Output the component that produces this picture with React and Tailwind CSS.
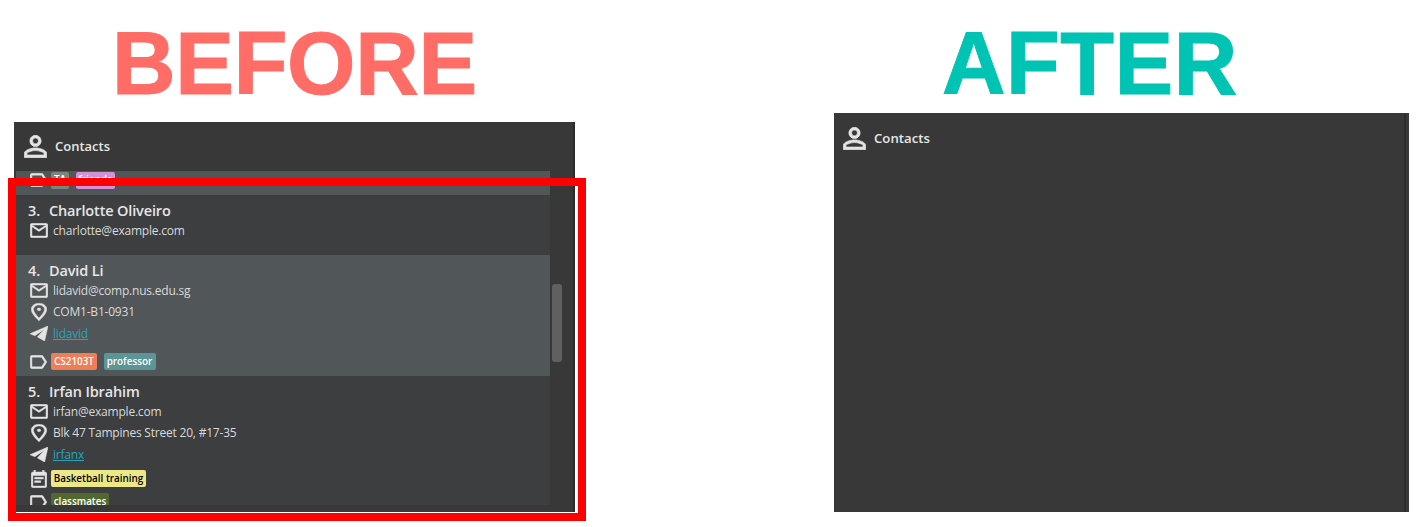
const PATHS = {
  person: {
    box: "3.8 3.8 16.4 16.4",
    d: "M12 5.9c1.16 0 2.1.94 2.1 2.1s-.94 2.1-2.1 2.1S9.9 9.16 9.9 8s.94-2.1 2.1-2.1m0 9c2.97 0 6.1 1.46 6.1 2.1v1.1H5.9V17c0-.64 3.13-2.1 6.1-2.1M12 4C9.79 4 8 5.79 8 8s1.79 4 4 4 4-1.79 4-4-1.79-4-4-4zm0 9c-2.67 0-8 1.34-8 4v3h16v-3c0-2.66-5.33-4-8-4z",
  },
  mail: {
    box: "1.8 3.8 20.4 16.4",
    d: "M22 6c0-1.1-.9-2-2-2H4c-1.1 0-2 .9-2 2v12c0 1.1.9 2 2 2h16c1.1 0 2-.9 2-2V6zm-2 0-8 5-8-5h16zm0 12H4V8l8 5 8-5v10z",
  },
  place: {
    box: "4.8 1.8 14.4 20.4",
    d: "M12 2C8.13 2 5 5.13 5 9c0 5.25 7 13 7 13s7-7.75 7-13c0-3.87-3.13-7-7-7zM7 9c0-2.76 2.24-5 5-5s5 2.24 5 5c0 2.88-2.88 7.19-5 9.88C9.92 16.21 7 11.85 7 9zM12 7.4a1.6 1.6 0 1 0 0 3.2a1.6 1.6 0 1 0 0-3.2z",
  },
  telegram: {
    box: "0 0 17 14",
    d: "M17 0L0 7.2L4.6 9L13.6 3L7 10.2L13.8 14Z",
  },
  label: {
    box: "2.8 4.8 19.4 14.4",
    d: "M17.63 5.84C17.27 5.33 16.67 5 16 5L5 5.01C3.9 5.01 3 5.9 3 7v10c0 1.1.9 1.99 2 1.99L16 19c.67 0 1.27-.33 1.63-.84L22 12l-4.37-6.16zM16 17H5V7h11l3.55 5L16 17z",
  },
  event: {
    box: "2.8 .8 18.4 20.4",
    d: "M19 3h-1V1h-2v2H8V1H6v2H5c-1.1 0-2 .9-2 2v14c0 1.1.9 2 2 2h14c1.1 0 2-.9 2-2V5c0-1.1-.9-2-2-2zm0 16H5V7h14v12zM7 9h10v2H7zM7 13h7v2H7z",
  },
};

function Icon({ name, className }) {
  return (
    <svg
      viewBox={PATHS[name].box}
      preserveAspectRatio="none"
      className={className}
      fill="currentColor"
      fillRule="evenodd"
      stroke="currentColor"
      strokeWidth="0.5"
    >
      <path d={PATHS[name].d} />
    </svg>
  );
}

const ICON_SIZE = {
  mail: "h-[15px] w-[18px]",
  place: "h-[18px] w-[16px]",
  telegram: "h-[15px] w-[18px]",
  label: "mr-px h-[14px] w-[17px]",
  event: "h-[18px] w-4",
};

function Slot({ name }) {
  return (
    <span className="flex w-[22px] shrink-0 justify-center text-[#e4e4e4]">
      <Icon name={name} className={ICON_SIZE[name]} />
    </span>
  );
}

function Line({ icon, link, children }) {
  return (
    <div className="flex h-[21.5px] items-center gap-[3px]">
      <Slot name={icon} />
      <span className={link ? "text-[#2aa3b9] underline" : "text-[#d9dada]"}>{children}</span>
    </div>
  );
}

function Tags({ icon, className, children }) {
  return (
    <div className={`flex h-[17px] items-center gap-[1px] ${className}`}>
      <Slot name={icon} />
      <div className="flex gap-[6.5px]">{children}</div>
    </div>
  );
}

function Tag({ className, children }) {
  return (
    <span className={`flex h-[17px] items-center justify-center whitespace-nowrap rounded-[2px] pb-px text-[9.9px] font-semibold ${className}`}>
      {children}
    </span>
  );
}

function Name({ number, children }) {
  return (
    <div className="flex h-[20px] items-center pt-[2px] text-[14.5px] font-semibold tracking-[-0.15px] text-[#e6e6e6]">
      <span className="w-[21px]">{number}.</span>
      <span>{children}</span>
    </div>
  );
}

const CARD = "pl-3 pt-[5px] whitespace-nowrap";

export default function App() {
  return (
    <div className="relative flex h-[527px] w-[1422px] overflow-hidden bg-white pl-[14px] font-['Open_Sans',sans-serif] text-[12px] tracking-[-0.21px]">
      <section className="w-[561px] shrink-0">
        <h1 className="flex h-[122px] items-center pt-[3px] pl-[98px] font-['Liberation_Sans',sans-serif] text-[88px] leading-none font-bold tracking-[-0.3px] text-[#ff6d66] [-webkit-text-stroke:1px_#ff6d66]">
          <span className="block origin-center scale-y-[1.02]">BEFORE</span>
        </h1>
        <div className="h-[390px] border-r-2 border-[#2b2b2b] bg-[#383838]">
          <div className="flex h-[49px] items-center gap-[8px] pl-[10px] text-[13px] font-semibold tracking-normal text-[#e6e6e6]">
            <Icon name="person" className="h-[23px] w-[23px] text-[#e4e4e4]" />
            <span>Contacts</span>
          </div>
          <div className="flex pl-[2px]">
            <div className="h-[334px] w-[534px] overflow-hidden">
              <div className="h-6 bg-[#515658] pl-3">
                <Tags icon="label" className="pt-px">
                  <Tag className="w-[18px] bg-[#78877b] tracking-normal text-white">TA</Tag>
                  <Tag className="w-[39px] bg-[#cf93d6] tracking-normal text-white">friends</Tag>
                </Tags>
              </div>
              <div className={`h-[60px] bg-[#3c3e3f] ${CARD}`}>
                <Name number={3}>Charlotte Oliveiro</Name>
                <Line icon="mail">charlotte@example.com</Line>
              </div>
              <div className={`h-[121px] bg-[#515658] ${CARD}`}>
                <Name number={4}>David Li</Name>
                <Line icon="mail">lidavid@comp.nus.edu.sg</Line>
                <Line icon="place">COM1-B1-0931</Line>
                <Line icon="telegram" link>lidavid</Line>
                <Tags icon="label" className="mt-[8.5px]">
                  <Tag className="w-[46px] bg-[#ef7d55] tracking-normal text-white">CS2103T</Tag>
                  <Tag className="w-[52px] bg-[#5c9597] tracking-normal text-white">professor</Tag>
                </Tags>
              </div>
              <div className={`h-[129px] bg-[#3c3e3f] ${CARD}`}>
                <Name number={5}>Irfan Ibrahim</Name>
                <Line icon="mail">irfan@example.com</Line>
                <Line icon="place">Blk 47 Tampines Street 20, #17-35</Line>
                <Line icon="telegram" link>irfanx</Line>
                <Tags icon="event" className="mt-[4.5px]">
                  <Tag className="w-[95px] bg-[#ece887] tracking-normal text-black">Basketball training</Tag>
                </Tags>
                <Tags icon="label" className="mt-[6px]">
                  <Tag className="w-[58px] bg-[#52682f] tracking-normal text-white">classmates</Tag>
                </Tags>
              </div>
            </div>
            <div className="ml-[2px] mt-[113px] h-[78px] w-[10px] rounded-[3px] bg-[#606060]" />
          </div>
        </div>
      </section>

      <section className="ml-[259px] w-[575px] shrink-0">
        <h1 className="flex h-[113px] items-center pt-[12px] pl-[108px] font-['Liberation_Sans',sans-serif] text-[88px] leading-none font-bold tracking-[0.5px] text-[#00c4b3] [font-kerning:none] [-webkit-text-stroke:1px_#00c4b3]">
          <span className="block origin-center scale-y-[1.02]">AFTER</span>
        </h1>
        <div className="flex h-[399px] bg-[#383838]">
          <div className="flex h-[50px] flex-1 items-center gap-[8px] pl-[9px] text-[13.2px] font-semibold tracking-normal text-[#e6e6e6]">
            <Icon name="person" className="h-[23px] w-[23px] text-[#e4e4e4]" />
            <span className="pt-px">Contacts</span>
          </div>
          <div className="mr-[3px] w-[2px] bg-[#2d2d2d]" />
        </div>
      </section>

      <div className="absolute left-2 top-[178px] h-[343px] w-[578px] border-8 border-[#ff0000]" />
    </div>
  );
}
